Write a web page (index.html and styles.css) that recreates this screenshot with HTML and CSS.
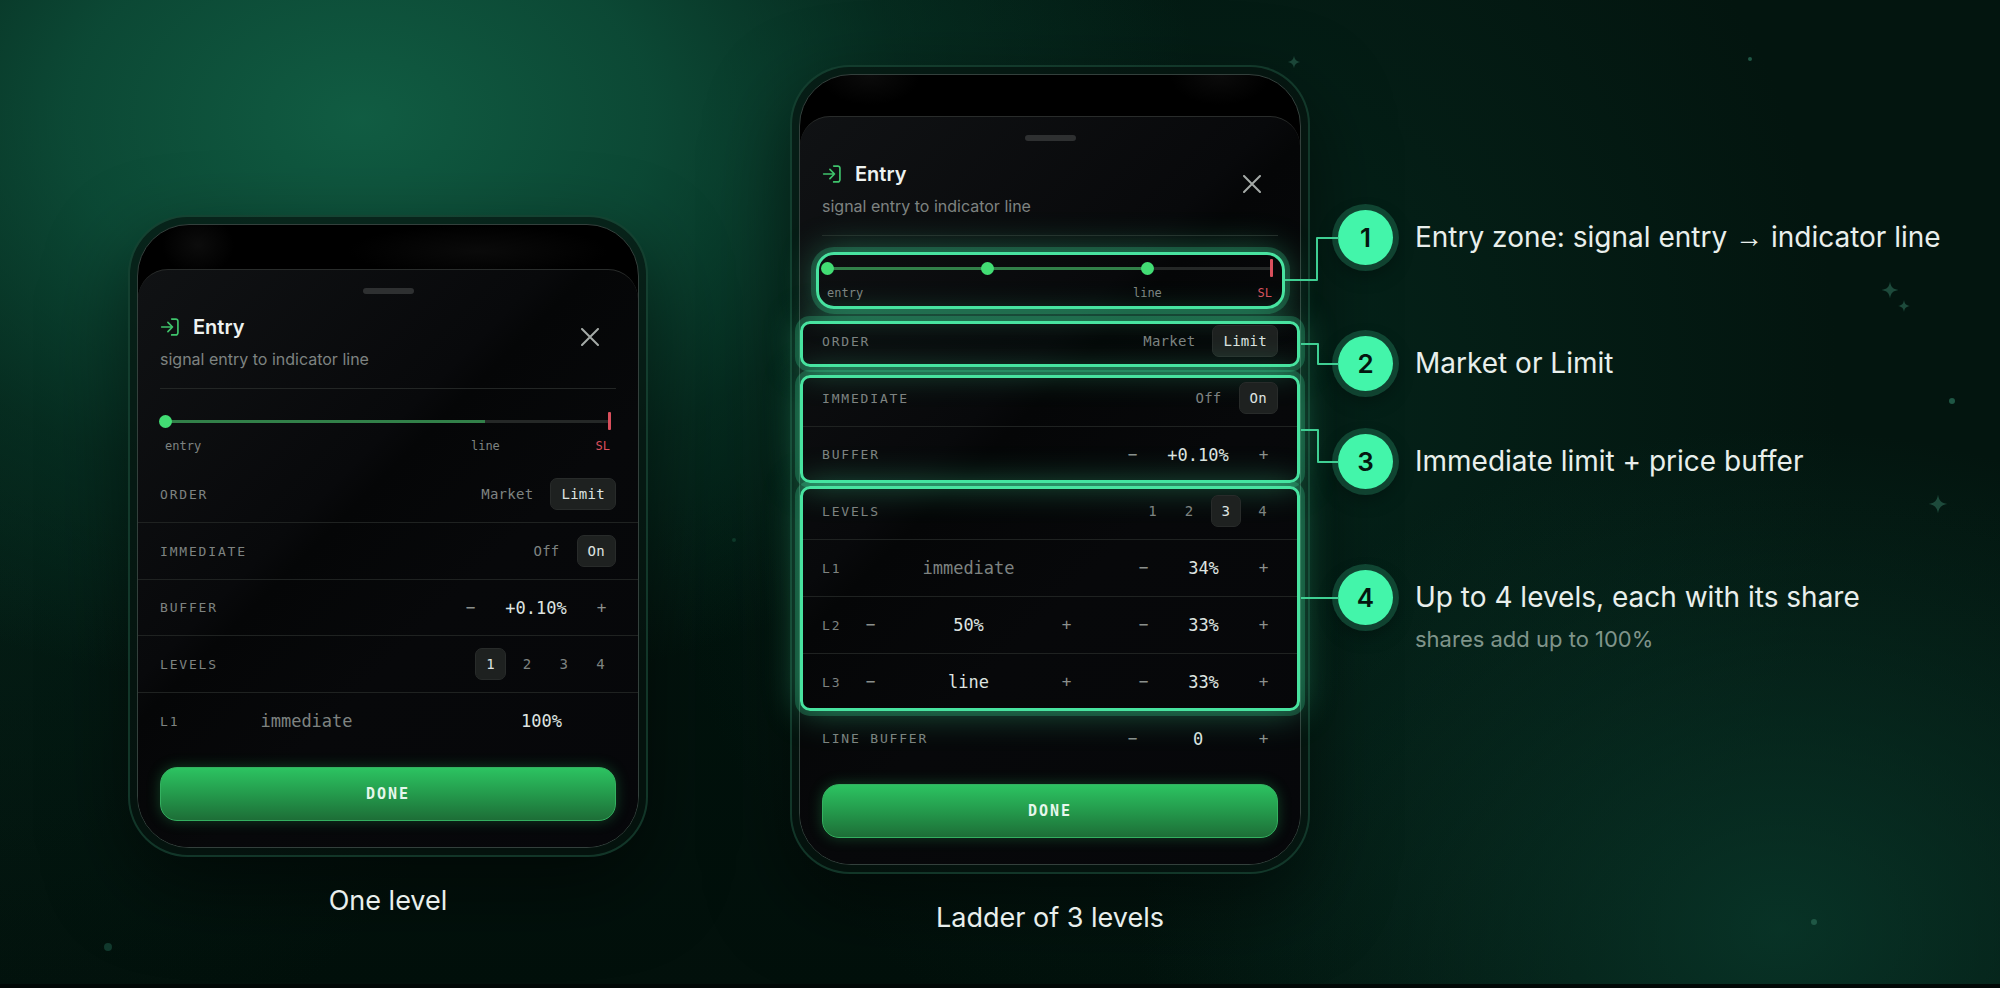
FILE: index.html
```html
<!DOCTYPE html>
<html lang="en">
<head>
    <meta charset="UTF-8">
    <meta name="viewport" content="width=device-width, initial-scale=1.0">
    <title>Entry ladder</title>
    <link rel="stylesheet" href="styles.css">
</head>
<body>

    <!-- Background sparkles -->
    <div class="sky" aria-hidden="true">
        <svg class="star star-a" viewBox="0 0 20 20"><path d="M10 0C11 6.500 13.500 9 20 10C13.500 11 11 13.500 10 20C9 13.500 6.500 11 0 10C6.500 9 9 6.500 10 0Z"/></svg>
        <svg class="star star-b" viewBox="0 0 20 20"><path d="M10 0C11 6.500 13.500 9 20 10C13.500 11 11 13.500 10 20C9 13.500 6.500 11 0 10C6.500 9 9 6.500 10 0Z"/></svg>
        <svg class="star star-c" viewBox="0 0 20 20"><path d="M10 0C11 6.500 13.500 9 20 10C13.500 11 11 13.500 10 20C9 13.500 6.500 11 0 10C6.500 9 9 6.500 10 0Z"/></svg>
        <svg class="star star-d" viewBox="0 0 20 20"><path d="M10 0C11 6.500 13.500 9 20 10C13.500 11 11 13.500 10 20C9 13.500 6.500 11 0 10C6.500 9 9 6.500 10 0Z"/></svg>
        <i class="speck speck-a"></i>
        <i class="speck speck-b"></i>
        <i class="speck speck-c"></i>
        <i class="speck speck-d"></i>
        <i class="speck speck-e"></i>
    </div>

    <main class="stage">

        <!-- One level -->
        <figure class="device device-low">
            <div class="frame">
                <div class="phone phone-tall-top">
                    <div class="sheet">
                        <div class="handle"></div>
                        <header class="sheet-head">
                            <div>
                                <h2><svg class="icon-entry" viewBox="0 0 24 24"><path d="M14 2.500h5a2.500 2.500 0 0 1 2.500 2.500v14a2.500 2.500 0 0 1-2.500 2.500h-5M2 12h13M9.500 6.500 15 12l-5.500 5.500"/></svg>Entry</h2>
                                <p>signal entry to indicator line</p>
                            </div>
                            <button class="close" aria-label="Close"><svg viewBox="0 0 18 18"><path d="M1 1l16 16M17 1L1 17"/></svg></button>
                        </header>

                        <div class="zone">
                            <div class="track">
                                <span class="fill"></span>
                                <span class="dot dot-start"></span>
                                <span class="stop"></span>
                            </div>
                            <div class="track-labels">
                                <span>entry</span>
                                <span class="mark-line">line</span>
                                <span class="sl">SL</span>
                            </div>
                        </div>

                        <div class="row">
                            <span class="label">ORDER</span>
                            <div class="segment"><button>Market</button><button class="active">Limit</button></div>
                        </div>
                        <div class="row">
                            <span class="label">IMMEDIATE</span>
                            <div class="segment"><button>Off</button><button class="active">On</button></div>
                        </div>
                        <div class="row">
                            <span class="label">BUFFER</span>
                            <div class="stepper stepper-wide"><button>−</button><output>+0.10%</output><button>+</button></div>
                        </div>
                        <div class="row">
                            <span class="label">LEVELS</span>
                            <div class="segment"><button class="active">1</button><button>2</button><button>3</button><button>4</button></div>
                        </div>
                        <div class="row level last">
                            <span class="label">L1</span>
                            <div class="stepper price"><output class="muted">immediate</output></div>
                            <div class="stepper share"><output>100%</output></div>
                        </div>

                        <button class="done">DONE</button>
                    </div>
                </div>
            </div>
            <figcaption>One level</figcaption>
        </figure>

        <!-- Ladder of 3 levels -->
        <figure class="device">
            <div class="frame">
                <div class="phone">
                    <div class="sheet">
                        <div class="handle"></div>
                        <header class="sheet-head">
                            <div>
                                <h2><svg class="icon-entry" viewBox="0 0 24 24"><path d="M14 2.500h5a2.500 2.500 0 0 1 2.500 2.500v14a2.500 2.500 0 0 1-2.500 2.500h-5M2 12h13M9.500 6.500 15 12l-5.500 5.500"/></svg>Entry</h2>
                                <p>signal entry to indicator line</p>
                            </div>
                            <button class="close" aria-label="Close"><svg viewBox="0 0 18 18"><path d="M1 1l16 16M17 1L1 17"/></svg></button>
                        </header>

                        <div class="zone">
                            <div class="track">
                                <span class="fill"></span>
                                <span class="dot dot-start"></span>
                                <span class="dot dot-middle"></span>
                                <span class="dot dot-line"></span>
                                <span class="stop"></span>
                            </div>
                            <div class="track-labels">
                                <span>entry</span>
                                <span class="mark-line">line</span>
                                <span class="sl">SL</span>
                            </div>
                            <span class="highlight highlight-zone"></span>
                        </div>

                        <div class="group">
                            <div class="row last">
                                <span class="label">ORDER</span>
                                <div class="segment"><button>Market</button><button class="active">Limit</button></div>
                            </div>
                            <span class="highlight highlight-order"></span>
                        </div>
                        <div class="group">
                            <div class="row">
                                <span class="label">IMMEDIATE</span>
                                <div class="segment"><button>Off</button><button class="active">On</button></div>
                            </div>
                            <div class="row last">
                                <span class="label">BUFFER</span>
                                <div class="stepper stepper-wide"><button>−</button><output>+0.10%</output><button>+</button></div>
                            </div>
                            <span class="highlight highlight-buffer"></span>
                        </div>
                        <div class="group">
                            <div class="row">
                                <span class="label">LEVELS</span>
                                <div class="segment"><button>1</button><button>2</button><button class="active">3</button><button>4</button></div>
                            </div>
                            <div class="row level">
                                <span class="label">L1</span>
                                <div class="stepper price"><output class="muted">immediate</output></div>
                                <div class="stepper share"><button>−</button><output>34%</output><button>+</button></div>
                            </div>
                            <div class="row level">
                                <span class="label">L2</span>
                                <div class="stepper price"><button>−</button><output>50%</output><button>+</button></div>
                                <div class="stepper share"><button>−</button><output>33%</output><button>+</button></div>
                            </div>
                            <div class="row level last">
                                <span class="label">L3</span>
                                <div class="stepper price"><button>−</button><output>line</output><button>+</button></div>
                                <div class="stepper share"><button>−</button><output>33%</output><button>+</button></div>
                            </div>
                            <span class="highlight highlight-levels"></span>
                        </div>
                        <div class="row last">
                            <span class="label">LINE BUFFER</span>
                            <div class="stepper stepper-wide"><button>−</button><output>0</output><button>+</button></div>
                        </div>

                        <button class="done">DONE</button>
                    </div>
                </div>
            </div>
            <figcaption>Ladder of 3 levels</figcaption>
        </figure>

        <!-- Callouts, each with the line that ties it to its highlight -->
        <ol class="callouts">
            <li class="callout callout-zone">
                <svg class="wire wire-zone" viewBox="0 0 54 46"><path d="M0 44H32V2H54"/></svg>
                <span class="badge">1</span>
                <div class="text"><p>Entry zone: signal entry <span class="arrow">→</span> indicator line</p></div>
            </li>
            <li class="callout callout-order">
                <svg class="wire wire-order" viewBox="0 0 38 24"><path d="M0 2H17V22H38"/></svg>
                <span class="badge">2</span>
                <div class="text"><p>Market or Limit</p></div>
            </li>
            <li class="callout callout-buffer">
                <svg class="wire wire-buffer" viewBox="0 0 38 36"><path d="M0 2H17V34H38"/></svg>
                <span class="badge">3</span>
                <div class="text"><p>Immediate limit + price buffer</p></div>
            </li>
            <li class="callout callout-levels">
                <svg class="wire wire-levels" viewBox="0 0 38 4"><path d="M0 2H38"/></svg>
                <span class="badge">4</span>
                <div class="text">
                    <p>Up to 4 levels, each with its share</p>
                    <small>shares add up to 100%</small>
                </div>
            </li>
        </ol>
    </main>

</body>
</html>
```
FILE: styles.css
```css
* {
    box-sizing: border-box;
}
body {
    margin: 0;
    min-height: 100vh;
    position: relative;
    overflow: hidden;
    font-family: Inter, "Liberation Sans", sans-serif;
    color: #e9efec;
    border-bottom: 4px solid #010806;
    background:
        radial-gradient(ellipse 840px 580px at 18% 12%, rgba(18, 100, 72, 0.9) 0%, rgba(15, 92, 67, 0.72) 35%, rgba(10, 72, 52, 0.4) 65%, transparent 100%),
        radial-gradient(ellipse 640px 500px at 89% 94%, rgba(10, 62, 47, 0.75), transparent 100%),
        radial-gradient(ellipse 600px 700px at 62% 40%, rgba(6, 50, 37, 0.5), transparent 100%),
        radial-gradient(ellipse 500px 500px at 0 60%, rgba(5, 40, 29, 0.4), transparent 100%),
        linear-gradient(180deg, #03150f 0%, #03150f 50%, #02100b 100%);
}
h2, p, figure, ol {
    margin: 0;
    padding: 0;
}
button {
    font: inherit;
    color: inherit;
    background: none;
    border: none;
    padding: 0;
    cursor: pointer;
}

/* Sparkles */
.star, .speck {
    position: absolute;
    transform: translate(-50%, -50%);
}
.star {
    fill: #1d4a3b;
}
.star-a { left: 64.7%; top: 62px; width: 13px; }
.star-b { left: 94.5%; top: 290px; width: 17px; }
.star-c { left: 95.2%; top: 306px; width: 12px; }
.star-d { left: 96.9%; top: 504px; width: 19px; }
.speck {
    width: 6px;
    height: 6px;
    border-radius: 50%;
    background: #1f5745;
}
.speck-a { left: 87.5%; top: 59px; width: 4px; height: 4px; }
.speck-b { left: 97.6%; top: 401px; }
.speck-c { left: 90.7%; top: 922px; }
.speck-d { left: 36.7%; top: 540px; width: 4px; height: 4px; background: #0f3c2c; }
.speck-e { left: 5.4%; top: 947px; width: 8px; height: 8px; background: #123a2e; }

.stage {
    position: relative;
    display: flex;
    align-items: flex-start;
    padding: 65px 0 0 6.4%;
}
.device {
    flex: 0 0 520px;
    margin-right: 142px;
}
.device + .callouts {
    margin-left: -114px;
}
.device-low {
    margin-top: 150px;
}
.device figcaption {
    margin-top: 26px;
    text-align: center;
    font-size: 27px;
    line-height: 36px;
}

/* Phone */
.frame {
    padding: 7px;
    border: 2px solid rgba(60, 150, 115, 0.27);
    border-radius: 60px;
    background: rgba(5, 18, 14, 0.7);
    box-shadow: 0 30px 80px rgba(0, 0, 0, 0.5);
}
.phone {
    padding-top: 41px;
    border: 1px solid #33403c;
    border-radius: 52px;
    background:
        radial-gradient(ellipse 50px 30px at 14% 0, #0b0b0b, transparent),
        radial-gradient(ellipse 50px 30px at 84% 0, #0b0b0b, transparent),
        #000;
}
.phone-tall-top {
    padding-top: 44px;
    background:
        radial-gradient(ellipse 36px 30px at 12% 20px, #0c0c0c, transparent),
        radial-gradient(ellipse 130px 26px at 68% 26px, #0a0a0a, transparent),
        #000;
}
.sheet {
    padding: 0 0 26px;
    border-top: 1px solid #292c2b;
    border-radius: 30px 30px 51px 51px;
    background: linear-gradient(135deg, #101214 0%, #08090b 38%, #050607 42%, #07080a 60%, #06070a 100%);
}
.handle {
    width: 51px;
    height: 6px;
    margin: 0 auto;
    position: relative;
    top: 18px;
    border-radius: 3px;
    background: #2e3031;
}
.sheet-head {
    display: flex;
    justify-content: space-between;
    margin: 0 22px;
    padding: 38px 17px 18px 0;
    border-bottom: 1px solid #232625;
}
.sheet-head h2 {
    display: flex;
    align-items: center;
    gap: 13px;
    font-size: 20px;
    line-height: 26px;
    font-weight: 600;
    color: #eef2f0;
}
.icon-entry {
    width: 20px;
    height: 20px;
    fill: none;
    stroke: #3fc46c;
    stroke-width: 2;
    stroke-linecap: round;
    stroke-linejoin: round;
}
.sheet-head p {
    margin-top: 8px;
    font-size: 16px;
    line-height: 22px;
    color: #7e8381;
}
.close {
    width: 18px;
    height: 18px;
    margin-top: 14px;
}
.close svg {
    display: block;
    stroke: #a5aaa7;
    stroke-width: 2;
    stroke-linecap: round;
}

/* Entry zone track */
.zone {
    position: relative;
    height: 77px;
    margin: 0 22px;
    padding: 31px 6px 0 5px;
}
.track {
    position: relative;
    height: 3px;
    background: #252827;
}
.fill {
    position: absolute;
    left: 0;
    top: 0;
    width: 72%;
    height: 3px;
    background: #328049;
}
.dot {
    position: absolute;
    top: -5px;
    width: 13px;
    height: 13px;
    margin-left: -6px;
    border-radius: 50%;
    background: #42dd74;
}
.dot-start { left: 0; }
.dot-middle { left: 36%; }
.dot-line { left: 72%; }
.stop {
    position: absolute;
    right: -1px;
    top: -8px;
    width: 3px;
    height: 18px;
    border-radius: 1px;
    background: #d94f5c;
}
.track-labels {
    position: relative;
    display: flex;
    justify-content: space-between;
    margin-top: 15px;
    font-family: "DejaVu Sans Mono", monospace;
    font-size: 12px;
    line-height: 16px;
    color: #7e8381;
}
.mark-line {
    position: absolute;
    left: 72%;
    transform: translateX(-50%);
}
.sl {
    color: #d94f5c;
}

/* Rows */
.group {
    position: relative;
}
.row {
    display: flex;
    align-items: center;
    justify-content: space-between;
    min-height: 56px;
    padding: 12px 22px;
    border-bottom: 1px solid #1f2221;
    font-family: "DejaVu Sans Mono", monospace;
    font-size: 17px;
    color: #dfe4e1;
}
.row.level {
    min-height: 57px;
}
.row.last {
    border-bottom-color: transparent;
}
.label {
    font-size: 13px;
    letter-spacing: 0.14em;
    color: #7e8381;
}
.segment {
    display: flex;
    gap: 6px;
}
.segment button {
    padding: 0 10px;
    border: 1px solid transparent;
    border-radius: 7px;
    font-size: 14px;
    line-height: 30px;
    letter-spacing: 0.02em;
    color: #7e8381;
}
.segment .active {
    color: #dfe4e1;
    background: #1e2120;
    border-color: #282b2a;
}
.stepper {
    display: flex;
    align-items: center;
}
.stepper output {
    flex: 1;
    text-align: center;
    line-height: 24px;
}
.stepper button {
    width: 29px;
    line-height: 24px;
    font-size: 16px;
    color: #8b908d;
}
.stepper-wide {
    width: 160px;
}
.level .label {
    width: 34px;
}
.price {
    flex: 1;
    margin-right: 48px;
}
.share {
    width: 149px;
}
.stepper .muted {
    color: #7e8381;
}
.done {
    display: block;
    width: calc(100% - 44px);
    height: 54px;
    margin: 17px 22px 0;
    border: 1px solid #34b060;
    border-radius: 17px;
    background: linear-gradient(180deg, #2cc361 0%, #249a4c 50%, #1d6e37 100%);
    box-shadow: 0 0 14px rgba(40, 190, 95, 0.3);
    font-family: "DejaVu Sans Mono", monospace;
    font-size: 15px;
    font-weight: bold;
    letter-spacing: 2px;
    color: #e6f7ec;
}

/* Highlights */
.highlight {
    position: absolute;
    pointer-events: none;
    border: 3px solid #48e3a0;
    border-radius: 10px;
    box-shadow: 0 0 0 5px rgba(66, 235, 165, 0.22), 0 0 36px rgba(66, 235, 165, 0.42);
}
.highlight-zone {
    inset: 16px -7px 4px -6px;
    border-radius: 18px;
}
.highlight-order { inset: 8px 0 3px; }
.highlight-buffer { inset: 5px 0 0; }
.highlight-levels { inset: 3px 0 0; }

/* Callouts */
.callouts {
    flex: 1;
    list-style: none;
}
.callout {
    position: relative;
    display: flex;
    gap: 22px;
    height: 55px;
}
.callout-zone { margin-top: 145px; }
.callout-order { margin-top: 71px; }
.callout-buffer { margin-top: 43px; }
.callout-levels { margin-top: 81px; }
.badge {
    flex: none;
    width: 55px;
    height: 55px;
    border-radius: 50%;
    background: #43f5aa;
    box-shadow: 0 0 0 6px rgba(30, 110, 80, 0.5), 0 8px 20px rgba(0, 0, 0, 0.4);
    font-size: 26px;
    line-height: 55px;
    font-weight: 600;
    text-align: center;
    color: #04170f;
}
.text p {
    font-size: 28px;
    line-height: 55px;
    white-space: nowrap;
}
.arrow {
    font-family: "Liberation Sans", sans-serif;
}
.text small {
    display: block;
    font-size: 22px;
    line-height: 28px;
    color: #7f948a;
}
.wire {
    position: absolute;
    left: -37px;
    width: 38px;
    fill: none;
    stroke: #3fcf93;
    stroke-width: 2;
    stroke-linejoin: round;
}
.wire-zone { left: -53px; top: 26px; width: 54px; }
.wire-order { top: 6px; }
.wire-buffer { top: -6px; }
.wire-levels { top: 26px; }
```
